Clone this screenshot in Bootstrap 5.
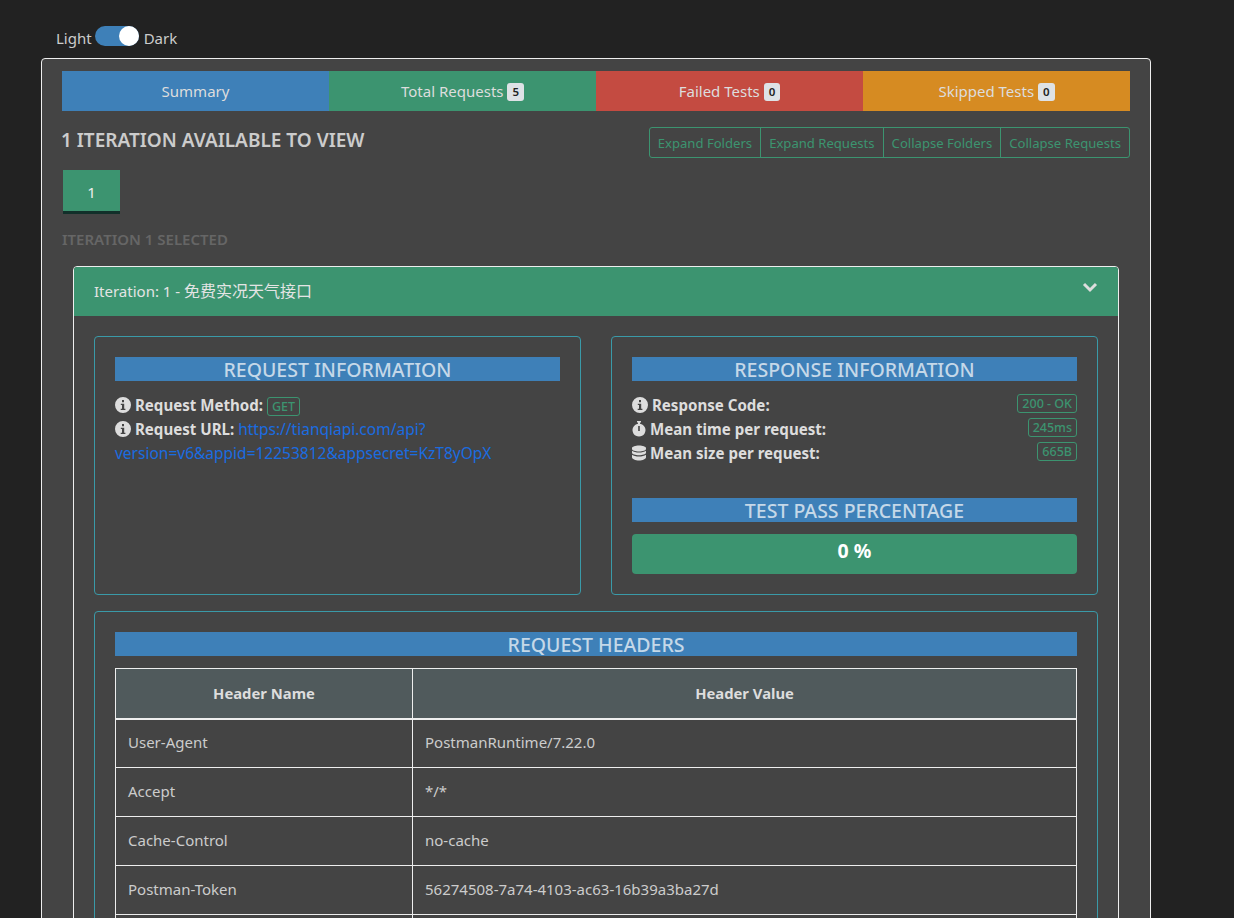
<!DOCTYPE html>
<html lang="en">
<head>
<meta charset="utf-8">
<title>Newman report</title>
<link href="https://cdn.jsdelivr.net/npm/bootstrap@5.3.0/dist/css/bootstrap.min.css" rel="stylesheet">
<style>
html,body{height:918px;overflow:hidden}
body{background:#222;color:#ccc;font:15px/24px "Noto Sans","Noto Sans CJK SC",sans-serif;padding:20px 83px 0 41px}
.theme-row{padding-left:15px;height:38px;gap:4px;line-height:24px}
.theme-row>span:not(.theme-toggle){margin-top:6px}
.theme-toggle{width:44px;height:20px;border-radius:10px;background:#3e80b8;display:block;position:relative;margin:6px 1px 0 -1px}
.theme-toggle::after{content:"";position:absolute;right:0;top:0;width:20px;height:20px;border-radius:50%;background:#fff}
.main-card{background:#444;border:1px solid #eee;border-radius:4px;padding:12px 20px 0;color:#ccc}
.tab-strip .nav-link{height:40px;border-radius:0;color:#ddd;padding:8px;line-height:24px}
.tab-blue{background:#3e80b8}.tab-green{background:#3c9470}.tab-red{background:#c44b41}.tab-orange{background:#d68b22}
.tab-strip .badge{background:#dee2e6;color:#222;font-size:11.5px;padding:3px 5px;border-radius:3px;font-weight:600;vertical-align:1px}
.page-title{font-size:19px;font-weight:600;color:#ccc;line-height:28px;margin:-1px 0 0 -1px}
.head-row{margin-top:16px}
.outline-btn{--bs-btn-color:#3c9470;--bs-btn-border-color:#3c9470;--bs-btn-padding-x:8px;--bs-btn-padding-y:3px;--bs-btn-font-size:13.1px;--bs-btn-border-radius:3px;--bs-btn-line-height:23px;padding-top:4px;padding-bottom:2px}
.iter-btn{width:57px;height:44px;margin:12px 0 0 1px;background:#3c9470;color:#eee;border-bottom:3px solid #12302a;line-height:44px;text-align:center}
.iter-note{font-size:15px;font-weight:600;color:#666;margin-top:13px;line-height:24px}
.acc-box{margin:15px 11px 0;border:1px solid #eee;border-radius:4px;background:#444}
.acc-head{height:48px;background:#3c9470;color:#e4e4e4;padding:12px 20px;border-radius:3px 3px 0 0}
.cjk-text{font-size:16px}
.acc-chev{width:16px;height:16px;margin-top:-8px}
.acc-body{padding:20px;border-top:1px solid #3c9470}
.teal-panel{border:1px solid #3a9aa8;border-radius:4px;padding:20px}
.info-panel{height:259px}
.panel-gap{--bs-gutter-x:30px;margin-bottom:16px}
.bar-title{background:#3e80b8;color:#c5d8e8;font-size:19.5px;font-weight:500;line-height:26px;height:24px;text-align:center;margin:0 0 12px}
.bar-title.pass-title{margin:33px 0 12px}
.fact-line{font-weight:700;color:#ddd;font-size:15.1px;height:24px;line-height:24px;white-space:nowrap}
.fact-line svg{width:16px;height:16px;vertical-align:-2px;fill:#ddd}
.fact-line svg.narrow-glyph{width:14px}
.tag-pill{font-size:12.5px;line-height:17px;padding:0 4px;border:1px solid #3c9470;color:#3c9470;border-radius:3px;font-weight:500;display:inline-block}
.tag-pill.align-self-start{margin-top:1px}
.req-link{color:#1a6ce0;font-weight:400;font-size:15.5px;text-decoration:none;white-space:normal}
.url-line{height:48px;white-space:normal}
.pass-bar{height:40px;border-radius:4px;background:#3c9470;color:#fff;font-weight:700;font-size:19.5px;line-height:34px;text-align:center}
.hdr-table{--bs-table-bg:transparent;--bs-table-color:#ccc;--bs-table-border-color:#eee;margin:0;table-layout:fixed;color:#ccc}
.hdr-table th{background:#505a5c;color:#ddd;text-align:center;height:50px;vertical-align:middle;font-size:14.8px;padding:0;border-bottom:2px solid #eee}
.hdr-table td{height:49px;padding:0 12px 2px;vertical-align:middle}
.name-col{width:297px}
</style>
</head>
<body>
<div class="theme-row d-flex align-items-start"><span>Light</span><span class="theme-toggle"></span><span>Dark</span></div>
<div class="main-card">
  <ul class="nav nav-justified tab-strip">
    <li class="nav-item tab-blue"><a class="nav-link" href="#">Summary</a></li>
    <li class="nav-item tab-green"><a class="nav-link" href="#">Total Requests <span class="badge">5</span></a></li>
    <li class="nav-item tab-red"><a class="nav-link" href="#">Failed Tests <span class="badge">0</span></a></li>
    <li class="nav-item tab-orange"><a class="nav-link" href="#">Skipped Tests <span class="badge">0</span></a></li>
  </ul>
  <div class="d-flex justify-content-between align-items-start head-row">
    <h4 class="page-title">1 ITERATION AVAILABLE TO VIEW</h4>
    <div class="btn-group">
      <button class="btn outline-btn">Expand Folders</button>
      <button class="btn outline-btn">Expand Requests</button>
      <button class="btn outline-btn">Collapse Folders</button>
      <button class="btn outline-btn">Collapse Requests</button>
    </div>
  </div>
  <div class="iter-btn">1</div>
  <div class="iter-note">ITERATION 1 SELECTED</div>
  <div class="acc-box">
    <div class="acc-head d-flex justify-content-between align-items-center">
      <span>Iteration: 1 - <span class="cjk-text">免费实况天气接口</span></span>
      <svg class="acc-chev" viewBox="0 0 16 16" fill="none" stroke="#ddd" stroke-width="3"><path d="M2 5l6 6 6-6"/></svg>
    </div>
    <div class="acc-body">
      <div class="row panel-gap">
        <div class="col-6">
          <div class="teal-panel info-panel">
            <h5 class="bar-title">REQUEST INFORMATION</h5>
            <div class="fact-line"><svg viewBox="0 0 16 16"><path fill-rule="evenodd" d="M8 0a8 8 0 1 0 0 16A8 8 0 0 0 8 0zM7 3h2v2.200H7zM5.800 6.700h3.400v5H10.400V13H5.700v-1.300H7V8H5.800z"/></svg> Request Method: <span class="tag-pill">GET</span></div>
            <div class="fact-line url-line"><svg viewBox="0 0 16 16"><path fill-rule="evenodd" d="M8 0a8 8 0 1 0 0 16A8 8 0 0 0 8 0zM7 3h2v2.200H7zM5.800 6.700h3.400v5H10.400V13H5.700v-1.300H7V8H5.800z"/></svg> Request URL: <a class="req-link" href="#">https://tianqiapi.com/api?version=v6&amp;appid=12253812&amp;appsecret=KzT8yOpX</a></div>
          </div>
        </div>
        <div class="col-6">
          <div class="teal-panel info-panel">
            <h5 class="bar-title">RESPONSE INFORMATION</h5>
            <div class="fact-line d-flex justify-content-between"><span><svg viewBox="0 0 16 16"><path fill-rule="evenodd" d="M8 0a8 8 0 1 0 0 16A8 8 0 0 0 8 0zM7 3h2v2.200H7zM5.800 6.700h3.400v5H10.400V13H5.700v-1.300H7V8H5.800z"/></svg> Response Code:</span><span class="tag-pill align-self-start">200 - OK</span></div>
            <div class="fact-line d-flex justify-content-between"><span><svg class="narrow-glyph" viewBox="0 0 14 16"><path fill-rule="evenodd" d="M5 0h4v1.500H8v1.200A6.500 6.500 0 1 1 6 2.700V1.500H5zM6.200 5v5h1.600V5z"/></svg> Mean time per request:</span><span class="tag-pill align-self-start">245ms</span></div>
            <div class="fact-line d-flex justify-content-between"><span><svg class="narrow-glyph" viewBox="0 0 15 16"><path d="M7.500 0C11.400 0 15 1.200 15 2.800v1C15 5.300 11.400 6.500 7.500 6.500S0 5.300 0 3.800v-1C0 1.200 3.600 0 7.500 0zM0 5.600C1.600 6.900 4.500 7.500 7.500 7.500s5.900-.6 7.500-1.900v2.200c0 1.500-3.600 2.700-7.500 2.700S0 9.300 0 7.800zM0 9.900c1.600 1.300 4.500 1.900 7.500 1.900s5.900-.6 7.500-1.900v2.600c0 1.900-3.600 3.500-7.500 3.500S0 14.400 0 12.500z"/></svg> Mean size per request:</span><span class="tag-pill align-self-start">665B</span></div>
            <h5 class="bar-title pass-title">TEST PASS PERCENTAGE</h5>
            <div class="pass-bar">0 %</div>
          </div>
        </div>
      </div>
      <div class="teal-panel">
        <h5 class="bar-title">REQUEST HEADERS</h5>
        <table class="table table-bordered hdr-table">
          <thead><tr><th class="name-col">Header Name</th><th>Header Value</th></tr></thead>
          <tbody>
            <tr><td>User-Agent</td><td>PostmanRuntime/7.22.0</td></tr>
            <tr><td>Accept</td><td>*/*</td></tr>
            <tr><td>Cache-Control</td><td>no-cache</td></tr>
            <tr><td>Postman-Token</td><td>56274508-7a74-4103-ac63-16b39a3ba27d</td></tr>
            <tr><td></td><td></td></tr>
          </tbody>
        </table>
      </div>
    </div>
  </div>
</div>
</body>
</html>
